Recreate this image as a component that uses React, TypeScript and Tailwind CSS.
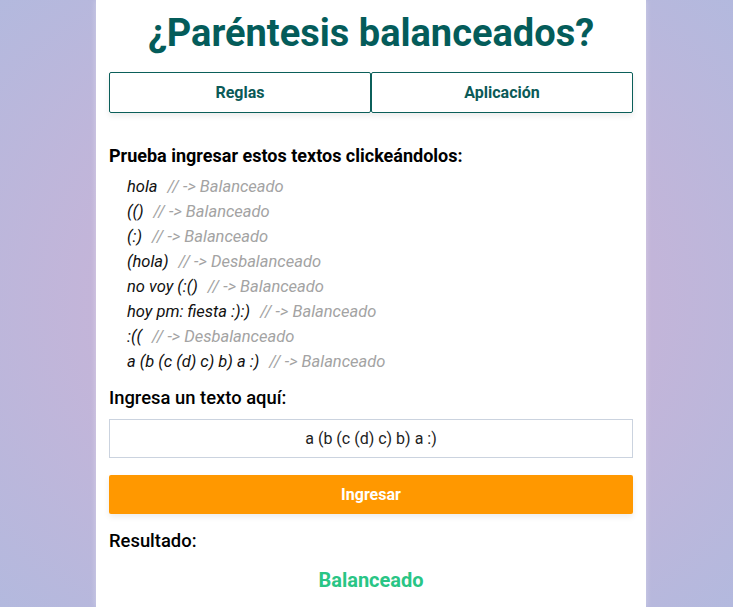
import React from "react";

const examples: [string, string][] = [
  ["hola", "Balanceado"],
  ["(()", "Balanceado"],
  ["(:)", "Balanceado"],
  ["(hola)", "Desbalanceado"],
  ["no voy (:()", "Balanceado"],
  ["hoy pm: fiesta :):)", "Balanceado"],
  [":((", "Desbalanceado"],
  ["a (b (c (d) c) b) a :)", "Balanceado"],
];

export default function App() {
  return (
    <div
      className="w-full h-[607px] overflow-hidden bg-[radial-gradient(ellipse_at_center,#cdb3d6_0%,#c6b4d8_45%,#b3b9de_100%)]"
      style={{ fontFamily: "Roboto, 'Noto Sans', sans-serif" }}
    >
      <div className="w-[550px] ml-[96px] h-full bg-white px-[13px] shadow-[0_0_6px_rgba(255,255,255,0.35)]">
        <h1 className="pt-[9px] text-center text-[38px] leading-[48px] font-bold text-[#045c5a]">
          ¿Paréntesis balanceados?
        </h1>
        <div className="mt-[15px] grid grid-cols-2 h-[41px] shadow-[0_3px_6px_rgba(0,0,0,0.08)]">
          <button className="border border-[#0b5f5a] rounded-[2px] bg-white text-[16px] font-bold text-[#0b5a57]">
            Reglas
          </button>
          <button className="border border-[#0b5f5a] rounded-[2px] bg-white text-[16px] font-bold text-[#0b5a57]">
            Aplicación
          </button>
        </div>
        <h2 className="mt-[32px] text-[18px] leading-[22px] font-bold text-black">
          Prueba ingresar estos textos clickeándolos:
        </h2>
        <ul className="mt-[7px] pl-[18px]">
          {examples.map(([t, r], i) => (
            <li key={i} className="italic font-normal text-[16.5px] leading-[25px] text-[#111]">
              <span>{t}</span>
              <span className="ml-[10px] text-[#a3a3a3]">// -&gt; {r}</span>
            </li>
          ))}
        </ul>
        <h3 className="mt-[13px] text-[18.4px] leading-[22px] font-medium text-black">
          Ingresa un texto aquí:
        </h3>
        <div className="mt-[10px] h-[39px] border border-[#cbd3df] flex items-center justify-center text-[16px] text-[#222]">
          a (b (c (d) c) b) a :)
        </div>
        <button className="mt-[17px] w-full h-[39px] rounded-[2px] bg-[#ff9800] text-white text-[16px] font-bold shadow-[0_3px_6px_rgba(0,0,0,0.08)]">
          Ingresar
        </button>
        <h3 className="mt-[16px] text-[18.4px] leading-[22px] font-medium text-black">
          Resultado:
        </h3>
        <p className="mt-[16px] text-center text-[20px] leading-[24px] font-bold text-[#29c585]">
          Balanceado
        </p>
      </div>
    </div>
  );
}
